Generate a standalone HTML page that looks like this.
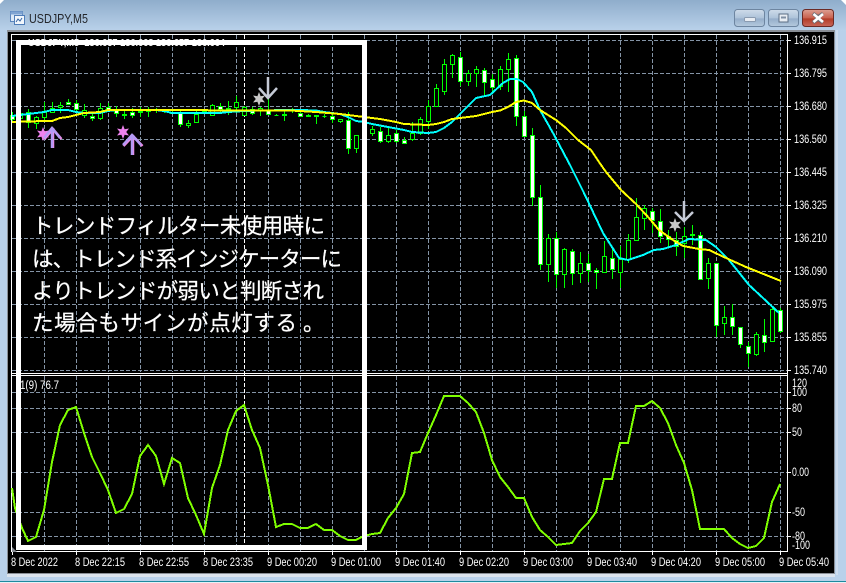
<!DOCTYPE html>
<html>
<head>
<meta charset="utf-8">
<style>
html,body{margin:0;padding:0;background:#b9d1ea;width:846px;height:583px;overflow:hidden}
svg{display:block;position:absolute;left:0;top:0}
text{font-family:"Liberation Sans",sans-serif;fill:#fff;font-size:11.5px}
.jp{font-family:"Liberation Sans","Noto Sans CJK JP",sans-serif;font-size:21.5px;stroke:#fff;stroke-width:.25px}
.t{font-size:11.5px;fill:#fff}
</style>
</head>
<body>
<svg width="846" height="583" viewBox="0 0 846 583" xmlns="http://www.w3.org/2000/svg">
<defs>
<linearGradient id="tb" x1="0" y1="0" x2="0" y2="1"><stop offset="0" stop-color="#8fadcb"/><stop offset="1" stop-color="#bad2ea"/></linearGradient>
<linearGradient id="bt" x1="0" y1="0" x2="0" y2="1"><stop offset="0" stop-color="#cfdcea"/><stop offset=".5" stop-color="#adc2d9"/><stop offset=".55" stop-color="#95aeca"/><stop offset="1" stop-color="#b5cade"/></linearGradient>
<linearGradient id="cl" x1="0" y1="0" x2="0" y2="1"><stop offset="0" stop-color="#dda093"/><stop offset=".5" stop-color="#c8604e"/><stop offset=".55" stop-color="#b23c28"/><stop offset="1" stop-color="#c9685a"/></linearGradient>
<polygon id="star" points="0,-7 1.6,-2.8 6,-3.5 3.2,0 6,3.5 1.6,2.8 0,7 -1.6,2.8 -6,3.5 -3.2,0 -6,-3.5 -1.6,-2.8"/>
</defs>

<!-- window frame -->
<rect x="0" y="0" width="846" height="583" fill="#b9d1ea"/>
<rect x="0" y="0" width="846" height="31" fill="url(#tb)"/>
<path d="M0 0h4L0 4zM846 0h-5L846 5z" fill="#fff"/>
<rect x="0" y="581" width="846" height="1" fill="#1d8a9e"/>
<rect x="0" y="582" width="846" height="1" fill="#e8f0f6"/>
<rect x="7" y="573" width="828" height="4" fill="#dbe3ec"/>
<rect x="7" y="30" width="828" height="544" fill="#8a8f96"/>
<rect x="8" y="32" width="826" height="541" fill="#000"/>
<rect x="836" y="30" width="2" height="545" fill="#cddcee"/>

<!-- title -->
<g>
<rect x="10.5" y="11.5" width="12" height="10" fill="#dbe8f6" stroke="#5b86bd"/>
<rect x="10.5" y="11.5" width="12" height="3" fill="#7fa4d2"/>
<rect x="14.5" y="15.5" width="10" height="9" fill="#f2f7fc" stroke="#4f7db8"/>
<path d="M16 22l2-3 2 2 2-3" fill="none" stroke="#3465a4"/>
</g>
<text x="29" y="23" style="font-size:12.5px;fill:#23262b" textLength="59" lengthAdjust="spacingAndGlyphs">USDJPY,M5</text>

<!-- buttons -->
<rect x="734.5" y="9.5" width="30" height="17" rx="3" fill="url(#bt)" stroke="#6d85a0"/>
<rect x="744.5" y="17.5" width="11" height="4" rx="1" fill="#e8edf3" stroke="#8a9bb0"/>
<rect x="768.5" y="9.5" width="30" height="17" rx="3" fill="url(#bt)" stroke="#6d85a0"/>
<rect x="779" y="14" width="9" height="8" fill="#e8edf3" stroke="#5d6f85"/>
<rect x="781" y="16.5" width="5" height="2" fill="#7f8fa3"/>
<rect x="802.5" y="9.5" width="31" height="17" rx="3" fill="url(#cl)" stroke="#6b2a25"/>
<path d="M813 13.5l5 3.3 5-3.3M813 22.5l5-3.3 5 3.3M813 13.5l10 9M823 13.5l-10 9" fill="none" stroke="#6b6f77" stroke-width="3.5"/>
<path d="M813.5 14l9.5 8M823 14l-9.5 8" fill="none" stroke="#fff" stroke-width="2.6"/>

<!-- grid -->
<g shape-rendering="crispEdges" stroke="#8494a6" stroke-width="1" stroke-dasharray="4 2" fill="none">
<path d="M12 40.500H787M12 73.500H787M12 106.500H787M12 139.500H787M12 172.500H787M12 205.500H787M12 238.500H787M12 271.500H787M12 304.500H787M12 337.500H787M12 370.500H787"/>
<path d="M12 392.500H787M12 408.500H787M12 432.500H787M12 472.500H787M12 512.500H787M12 536.500H787"/>
<path d="M44.500 35V372M76.500 35V372M108.500 35V372M140.500 35V372M172.500 35V372M204.500 35V372M236.500 35V372M268.500 35V372M300.500 35V372M332.500 35V372M364.500 35V372M396.500 35V372M428.500 35V372M460.500 35V372M492.500 35V372M524.500 35V372M556.500 35V372M588.500 35V372M620.500 35V372M652.500 35V372M684.500 35V372M716.500 35V372M748.500 35V372M780.500 35V372"/>
<path d="M44.500 376V551M76.500 376V551M108.500 376V551M140.500 376V551M172.500 376V551M204.500 376V551M236.500 376V551M268.500 376V551M300.500 376V551M332.500 376V551M364.500 376V551M396.500 376V551M428.500 376V551M460.500 376V551M492.500 376V551M524.500 376V551M556.500 376V551M588.500 376V551M620.500 376V551M652.500 376V551M684.500 376V551M716.500 376V551M748.500 376V551M780.500 376V551"/>
</g>
<path d="M244.500 35V551" stroke="#fff" stroke-dasharray="4 2" shape-rendering="crispEdges" fill="none"/>

<!-- candles wicks -->
<path shape-rendering="crispEdges" fill="none" stroke="#00ff00" d="M12.500 112V122M20.500 110V120M28.500 109V128M36.500 116V129M44.500 102V120M52.500 102V112M60.500 102V113M68.500 99V105M76.500 100V113M84.500 104V118M92.500 113V121M100.500 103V120M108.500 103V112M116.500 106V117M124.500 110V119M132.500 108V118M140.500 107V117M148.500 107V117M156.500 108V113M164.500 109V113M172.500 110V114M180.500 110V127M188.500 120V128M196.500 110V122M204.500 109V113M212.500 104V116M220.500 103V113M228.500 101V115M236.500 96V113M244.500 106V116M252.500 107V115M260.500 107V116M268.500 97V115M276.500 114V116M284.500 110V121M292.500 108V113M300.500 110V117M308.500 114V117M316.500 115V124M324.500 114V118M332.500 113V123M340.500 119V123M348.500 112V154M356.500 135V153M364.500 125V140M372.500 126V136M380.500 127V143M388.500 128V143M396.500 130V143M404.500 137V144M412.500 122V141M420.500 117V135M428.500 100V129M436.500 84V106M444.500 59V95M452.500 54V78M460.500 52V86M468.500 70V86M476.500 66V87M484.500 68V97M492.500 74V92M500.500 66V90M508.500 53V92M516.500 55V126M524.500 111V137M532.500 128V206M540.500 185V270M548.500 234V282M556.500 232V288M564.500 248V288M572.500 249V285M580.500 252V283M588.500 254V282M596.500 268V289M604.500 241V272M612.500 247V279M620.500 246V288M628.500 234V263M636.500 198V240M644.500 205V230M652.500 208V233M660.500 209V243M668.500 230V247M676.500 232V256M684.500 227V258M692.500 225V245M700.500 232V279M708.500 258V289M716.500 263V337M724.500 306V335M732.500 304V335M740.500 327V348M748.500 342V367M756.500 332V356M764.500 319V352M772.500 307V342M780.500 308V333"/>
<!-- hollow bodies -->
<path shape-rendering="crispEdges" fill="#000" stroke="#00ff00" d="M18.500 113.500h4V118.500h-4zM34.500 117.500h4V123.500h-4zM42.500 112.500h4V117.500h-4zM50.500 108.500h4V112.500h-4zM58.500 105.500h4V107.500h-4zM82.500 110.500h4V115.500h-4zM98.500 108.500h4V118.500h-4zM138.500 111.500h4V112.500h-4zM146.500 110.500h4V111.500h-4zM154.500 109.500h4V110.500h-4zM186.500 123.500h4V125.500h-4zM194.500 114.500h4V122.500h-4zM202.500 111.500h4V112.500h-4zM210.500 105.500h4V115.500h-4zM234.500 102.500h4V107.500h-4zM242.500 107.500h4V115.500h-4zM258.500 108.500h4V110.500h-4zM338.500 119.500h4V121.500h-4zM354.500 135.500h4V148.500h-4zM362.500 127.500h4V132.500h-4zM370.500 129.500h4V133.500h-4zM386.500 135.500h4V141.500h-4zM410.500 133.500h4V139.500h-4zM418.500 119.500h4V133.500h-4zM426.500 106.500h4V121.500h-4zM434.500 88.500h4V106.500h-4zM442.500 64.500h4V91.500h-4zM450.500 55.500h4V64.500h-4zM466.500 73.500h4V81.500h-4zM474.500 69.500h4V73.500h-4zM498.500 69.500h4V86.500h-4zM506.500 59.500h4V69.500h-4zM546.500 238.500h4V264.500h-4zM562.500 249.500h4V274.500h-4zM578.500 263.500h4V273.500h-4zM602.500 256.500h4V272.500h-4zM618.500 259.500h4V272.500h-4zM626.500 240.500h4V259.500h-4zM634.500 217.500h4V240.500h-4zM642.500 208.500h4V218.500h-4zM682.500 236.500h4V243.500h-4zM690.500 234.500h4V235.500h-4zM706.500 263.500h4V278.500h-4zM722.500 317.500h4V323.500h-4zM754.500 334.500h4V354.500h-4zM770.500 309.500h4V341.500h-4z"/>
<!-- white bodies -->
<path shape-rendering="crispEdges" fill="#fff" stroke="#00ff00" d="M10.500 115.500h4V119.500h-4zM26.500 112.500h4V122.500h-4zM66.500 102.500h4V104.500h-4zM74.500 103.500h4V109.500h-4zM90.500 116.500h4V118.500h-4zM106.500 107.500h4V109.500h-4zM114.500 109.500h4V113.500h-4zM122.500 114.500h4V115.500h-4zM130.500 112.500h4V115.500h-4zM162.500 110.500h4V111.500h-4zM170.500 112.500h4V113.500h-4zM178.500 113.500h4V124.500h-4zM218.500 106.500h4V109.500h-4zM226.500 108.500h4V109.500h-4zM250.500 109.500h4V113.500h-4zM266.500 110.500h4V114.500h-4zM274.500 115.500h4V115.500h-4zM282.500 114.500h4V115.500h-4zM298.500 113.500h4V116.500h-4zM306.500 115.500h4V116.500h-4zM314.500 115.500h4V116.500h-4zM322.500 116.500h4V116.500h-4zM330.500 116.500h4V119.500h-4zM346.500 120.500h4V148.500h-4zM378.500 131.500h4V141.500h-4zM394.500 133.500h4V141.500h-4zM402.500 140.500h4V143.500h-4zM458.500 57.500h4V81.500h-4zM482.500 70.500h4V82.500h-4zM490.500 79.500h4V87.500h-4zM514.500 58.500h4V116.500h-4zM522.500 116.500h4V136.500h-4zM530.500 135.500h4V197.500h-4zM538.500 197.500h4V264.500h-4zM554.500 238.500h4V274.500h-4zM570.500 251.500h4V273.500h-4zM586.500 263.500h4V270.500h-4zM594.500 270.500h4V272.500h-4zM610.500 258.500h4V269.500h-4zM650.500 211.500h4V220.500h-4zM658.500 221.500h4V236.500h-4zM666.500 236.500h4V239.500h-4zM674.500 240.500h4V246.500h-4zM698.500 235.500h4V279.500h-4zM714.500 263.500h4V325.500h-4zM730.500 317.500h4V326.500h-4zM738.500 327.500h4V344.500h-4zM746.500 346.500h4V353.500h-4zM762.500 335.500h4V342.500h-4zM778.500 310.500h4V331.500h-4z"/>

<!-- MA lines -->
<polyline shape-rendering="crispEdges" fill="none" stroke="#00ffff" stroke-width="2" points="12,116 28,114 44,112 52,110 68,110 76,112 84,113 100,113 108,111 116,110 156,110 164,111 172,113 220,113 228,112 244,111 284,110 300,110 316,110.500 324,112 340,114 348,117 356,121 364,122 372,124 388,127 404,130 412,132 428,133 436,132 444,128 452,122 463,111 476,98 490,95 503,83 510,79 517,79 523,82 532,92 540,110 553,133 570,165 584,193 603,233 619,258 628,260 643,255 654,250 663,249 676,245 689,239 706,240 716,247 729,260 749,285 763,298 779,313"/>
<polyline shape-rendering="crispEdges" fill="none" stroke="#ffff00" stroke-width="2" points="12,122 44,121 52,121 60,118 68,117 76,115 84,113 100,112 108,110 124,110 290,110.500 300,111 316,112 340,114 356,116 364,117 380,119 396,122 404,124 428,125 436,124 444,122 452,119 460,118 476,116 484,114 492,112 500,110.500 508,107 516,102 524,100.500 532,103 540,110 548,115 556,120 566,128 578,140 591,150 599,162 606,172 621,190 636,204 649,218 659,230 673,240 683,246 699,249 709,250 726,258 746,267 766,275 781,281"/>

<!-- chart frame -->
<g shape-rendering="crispEdges" fill="none" stroke="#fff">
<rect x="11.500" y="34.500" width="776" height="517"/>
<path d="M11 373.500H788M11 375.500H788"/>
<path d="M788 40.500h3M788 73.500h3M788 106.500h3M788 139.500h3M788 172.500h3M788 205.500h3M788 238.500h3M788 271.500h3M788 304.500h3M788 337.500h3M788 370.500h3M788 392.500h3M788 408.500h3M788 432.500h3M788 472.500h3M788 512.500h3M788 536.500h3"/>
<path d="M12.500 552v3M76.500 552v3M140.500 552v3M204.500 552v3M268.500 552v3M332.500 552v3M396.500 552v3M460.500 552v3M524.500 552v3M588.500 552v3M652.500 552v3M716.500 552v3M780.500 552v3"/>
</g>
<polygon points="12,547 12,552 17,552" fill="#8a8f96"/>

<!-- oscillator -->
<polyline shape-rendering="crispEdges" fill="none" stroke="#7fff00" stroke-width="2" points="12,488 15,508 22,528 28,541 36,537 44,510 52,462 60,425 68,410 76,407 84,433 92,457 100,473 108,490 116,513 124,509 132,494 140,456 148,445 156,456 164,484 172,458 180,463 188,498 196,515 204,534 212,488 220,465 228,430 236,411 244,405 252,430 260,448 268,485 276,527 284,524 292,524 300,528 308,528 316,524 324,530 332,530 340,536 348,540 356,540 364,536 372,534 380,533 388,518 396,508 404,494 412,453 420,452 428,433 436,415 444,396 452,396 460,396 468,403 476,412 484,433 492,460 500,477 508,487 516,498 524,498 532,517 540,530 548,537 556,545 564,544 572,543 580,531 588,523 596,512 604,479 612,479 620,443 628,443 636,406 644,406 652,401 660,408 668,423 676,445 684,463 692,490 700,529 708,529 716,529 724,529 732,538 740,544 748,548 756,546 764,538 772,502 780,484"/>

<!-- signals -->
<g>
<use href="#star" x="43" y="134" fill="#ee82ee"/>
<path d="M53 128V148M44.500 139L53 129L61.500 139" fill="none" stroke="#f08be8" stroke-width="2.5"/>
<path d="M52 128V148M44 138L52 128L60 138" fill="none" stroke="#b49af5" stroke-width="2.5"/>
<use href="#star" x="123" y="132" fill="#ee82ee"/>
<path d="M133 135V155M123.500 146L133 136L142.500 146" fill="none" stroke="#f08be8" stroke-width="2.5"/>
<path d="M132 135V155M123 145L132 135L141 145" fill="none" stroke="#b49af5" stroke-width="2.5"/>
<use href="#star" x="259" y="99" fill="#c8c8c8"/>
<path d="M268 77V98M259 88L268 98L277 88" fill="none" stroke="#c5cad6" stroke-width="2.5"/>
<use href="#star" x="675" y="225" fill="#c8c8c8"/>
<path d="M684 201V221M675 212L684 221L693 212" fill="none" stroke="#c5cad6" stroke-width="2.5"/>
</g>

<!-- top caption, mostly hidden by box -->
<text x="28" y="46" style="font-size:10px" font-weight="bold" textLength="197" lengthAdjust="spacingAndGlyphs">USDJPY,M5&#160; 136.657 136.668 136.657 136.664</text>
<text x="20" y="389" textLength="39" lengthAdjust="spacingAndGlyphs">1(9) 76.7</text>

<!-- white overlay box -->
<rect x="18.500" y="42.500" width="346" height="505" fill="none" stroke="#fff" stroke-width="5" shape-rendering="crispEdges"/>

<!-- price labels -->
<g>
<text x="794" y="44" textLength="33" lengthAdjust="spacingAndGlyphs">136.915</text>
<text x="794" y="77" textLength="33" lengthAdjust="spacingAndGlyphs">136.795</text>
<text x="794" y="110" textLength="33" lengthAdjust="spacingAndGlyphs">136.680</text>
<text x="794" y="143" textLength="33" lengthAdjust="spacingAndGlyphs">136.560</text>
<text x="794" y="176" textLength="33" lengthAdjust="spacingAndGlyphs">136.445</text>
<text x="794" y="209" textLength="33" lengthAdjust="spacingAndGlyphs">136.325</text>
<text x="794" y="242" textLength="33" lengthAdjust="spacingAndGlyphs">136.210</text>
<text x="794" y="275" textLength="33" lengthAdjust="spacingAndGlyphs">136.090</text>
<text x="794" y="308" textLength="33" lengthAdjust="spacingAndGlyphs">135.975</text>
<text x="794" y="341" textLength="33" lengthAdjust="spacingAndGlyphs">135.855</text>
<text x="794" y="374" textLength="33" lengthAdjust="spacingAndGlyphs">135.740</text>
<text x="792" y="387" textLength="15" lengthAdjust="spacingAndGlyphs">120</text>
<text x="792" y="396" textLength="15" lengthAdjust="spacingAndGlyphs">100</text>
<text x="792" y="412" textLength="10" lengthAdjust="spacingAndGlyphs">80</text>
<text x="792" y="436" textLength="10" lengthAdjust="spacingAndGlyphs">50</text>
<text x="792" y="476" textLength="17" lengthAdjust="spacingAndGlyphs">0.00</text>
<text x="792" y="516" textLength="13" lengthAdjust="spacingAndGlyphs">-50</text>
<text x="792" y="540" textLength="13" lengthAdjust="spacingAndGlyphs">-80</text>
<text x="792" y="549" textLength="18" lengthAdjust="spacingAndGlyphs">-100</text>
</g>

<!-- time labels -->
<g>
<text class="t" x="11" y="566" textLength="47" lengthAdjust="spacingAndGlyphs">8 Dec 2022</text>
<text class="t" x="75" y="566" textLength="50" lengthAdjust="spacingAndGlyphs">8 Dec 22:15</text>
<text class="t" x="139" y="566" textLength="50" lengthAdjust="spacingAndGlyphs">8 Dec 22:55</text>
<text class="t" x="203" y="566" textLength="50" lengthAdjust="spacingAndGlyphs">8 Dec 23:35</text>
<text class="t" x="267" y="566" textLength="50" lengthAdjust="spacingAndGlyphs">9 Dec 00:20</text>
<text class="t" x="331" y="566" textLength="50" lengthAdjust="spacingAndGlyphs">9 Dec 01:00</text>
<text class="t" x="395" y="566" textLength="50" lengthAdjust="spacingAndGlyphs">9 Dec 01:40</text>
<text class="t" x="459" y="566" textLength="50" lengthAdjust="spacingAndGlyphs">9 Dec 02:20</text>
<text class="t" x="523" y="566" textLength="50" lengthAdjust="spacingAndGlyphs">9 Dec 03:00</text>
<text class="t" x="587" y="566" textLength="50" lengthAdjust="spacingAndGlyphs">9 Dec 03:40</text>
<text class="t" x="651" y="566" textLength="50" lengthAdjust="spacingAndGlyphs">9 Dec 04:20</text>
<text class="t" x="715" y="566" textLength="50" lengthAdjust="spacingAndGlyphs">9 Dec 05:00</text>
<text class="t" x="779" y="566" textLength="50" lengthAdjust="spacingAndGlyphs">9 Dec 05:40</text>
</g>

<!-- annotation -->
<g>
<text class="jp" x="32" y="233.500" textLength="293">トレンドフィルター未使用時に</text>
<text class="jp" x="32" y="266.500" textLength="310">は、トレンド系インジケーターに</text>
<text class="jp" x="32" y="298.500" textLength="292">よりトレンドが弱いと判断され</text>
<text class="jp" x="32" y="330.500" textLength="265">た場合もサインが点灯する</text>
<text class="jp" x="303" y="330.500">。</text>
</g>
</svg>
</body>
</html>
